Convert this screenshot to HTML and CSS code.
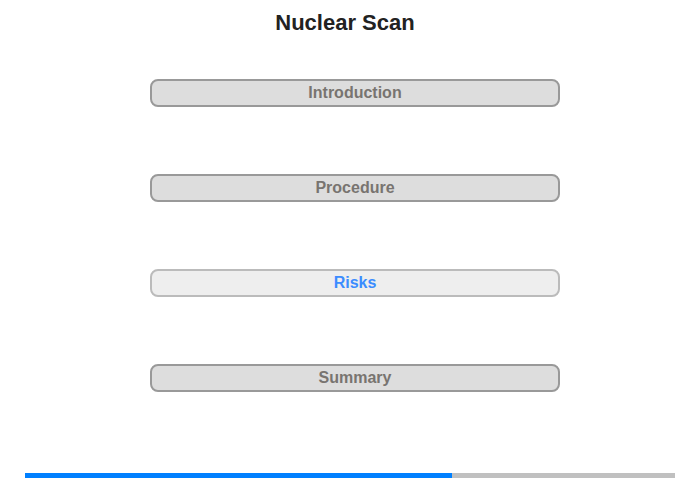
FILE: index.html
```html
<!DOCTYPE html>
<html>
<head>
<meta charset="utf-8">
<link rel="stylesheet" href="styles.css">
</head>
<body>
<div class="page">
  <h1 class="title">Nuclear Scan</h1>
  <div class="menu">
    <div class="btn">Introduction</div>
    <div class="btn">Procedure</div>
    <div class="btn active">Risks</div>
    <div class="btn">Summary</div>
  </div>
  <div class="progress"><div class="fill" style="width:427px"></div></div>
</div>
</body>
</html>
```
FILE: styles.css
```css
html, body {
  margin: 0;
  padding: 0;
  background: #fff;
}
.page {
  width: 700px;
  height: 480px;
  font-family: "Liberation Sans", Arial, sans-serif;
  display: flex;
  flex-direction: column;
  align-items: center;
}
.title {
  margin: 10px 10px 0 0;
  font-size: 22px;
  line-height: 26px;
  font-weight: bold;
  color: #222;
}
.menu {
  margin: 43px 0 0 10px;
  display: flex;
  flex-direction: column;
  gap: 67px;
}
.btn {
  box-sizing: border-box;
  width: 410px;
  height: 28px;
  border: 2px solid #999;
  border-radius: 8px;
  background: #ddd;
  color: #787470;
  font-size: 16px;
  font-weight: bold;
  line-height: 24px;
  text-align: center;
}
.btn.active {
  background: #eee;
  border-color: #bbb;
  color: #3b8cff;
}
.progress {
  margin-top: 81px;
  width: 650px;
  height: 5px;
  background: #c0c0c0;
  display: flex;
}
.fill {
  height: 100%;
  background: #0080ff;
}
```
